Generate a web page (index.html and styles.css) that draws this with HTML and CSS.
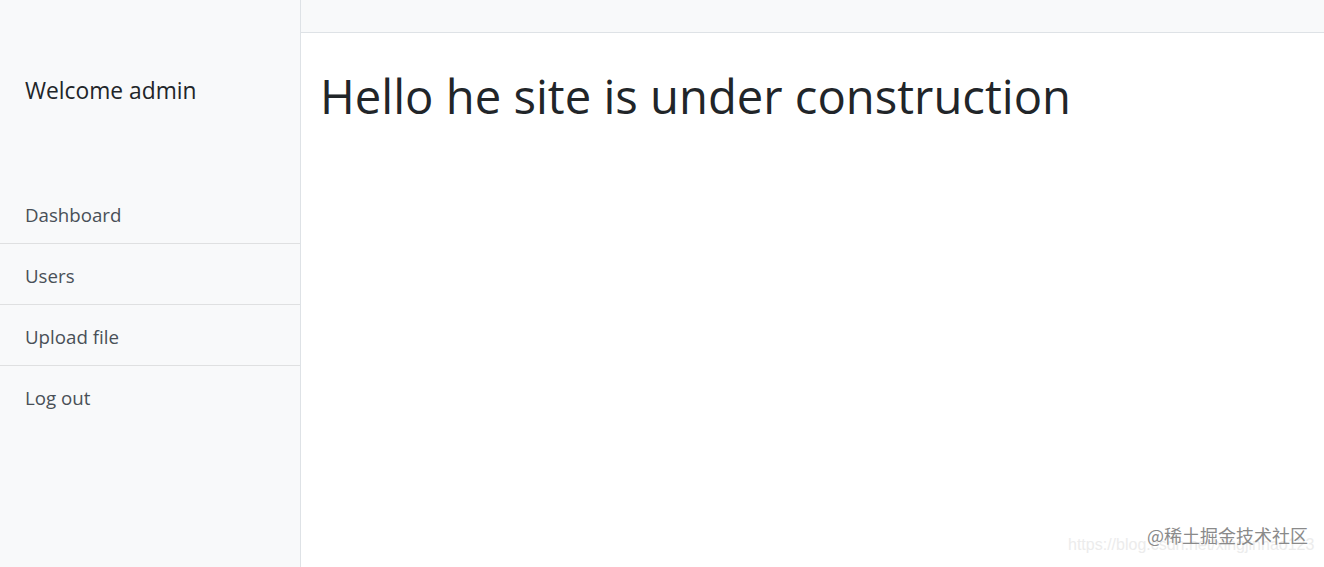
FILE: index.html
```html
<!DOCTYPE html>
<html lang="en">
<head>
<meta charset="utf-8">
<title>Admin</title>
<link rel="stylesheet" href="styles.css">
</head>
<body>
<div class="wrapper">
  <aside class="sidebar">
    <div class="sidebar-heading">Welcome admin</div>
    <nav class="list-group">
      <a class="list-item" href="#">Dashboard</a>
      <a class="list-item" href="#">Users</a>
      <a class="list-item" href="#">Upload file</a>
      <a class="list-item" href="#">Log out</a>
    </nav>
  </aside>
  <main class="page">
    <div class="topbar"></div>
    <div class="content">
      <h1 class="title">Hello he site is under construction</h1>
    </div>
  </main>
</div>
<div class="watermark">
  <span class="wm-url">https://blog.csdn.net/xingjinhao123</span>
  <span class="wm-brand">@稀土掘金技术社区</span>
</div>
</body>
</html>
```
FILE: styles.css
```css
* { box-sizing: border-box; }
html, body { margin: 0; padding: 0; height: 100%; }
body {
  font-family: "Open Sans", "Noto Sans", sans-serif;
  color: #212529;
  background: #fff;
  overflow: hidden;
}
.wrapper {
  display: flex;
  height: 567px;
}
.sidebar {
  width: 301px;
  flex: none;
  background: #f8f9fa;
  border-right: 1px solid #dee2e6;
}
.sidebar-heading {
  padding: 76px 25px 0;
  height: 183px;
  font-size: 22.8px;
  line-height: 30px;
  color: #212529;
}
.list-group {
  display: flex;
  flex-direction: column;
}
.list-item {
  display: block;
  height: 61px;
  padding: 17px 25px 13px;
  font-size: 18.7px;
  line-height: 30px;
  color: #495057;
  text-decoration: none;
  border-bottom: 1px solid #dfe0e1;
}
.list-item:last-child { border-bottom: none; }
.page {
  flex: 1;
  display: flex;
  flex-direction: column;
}
.topbar {
  height: 33px;
  background: #f8f9fa;
  border-bottom: 1px solid #dee2e6;
}
.content {
  padding: 33px 19px 0;
}
.title {
  margin: 0;
  font-size: 47.2px;
  font-weight: 400;
  line-height: 60px;
  color: #212529;
}
.watermark {
  position: absolute;
  right: 10px;
  bottom: 10px;
  width: 260px;
  height: 38px;
}
.wm-url {
  position: absolute;
  left: 14px;
  top: 17px;
  font-family: "Liberation Sans", sans-serif;
  font-size: 16px;
  color: #ececec;
  white-space: nowrap;
}
.wm-brand {
  position: absolute;
  right: 6px;
  top: 3px;
  font-family: "Noto Sans CJK SC", sans-serif;
  font-size: 18px;
  color: #8a8a8a;
  white-space: nowrap;
}
```
